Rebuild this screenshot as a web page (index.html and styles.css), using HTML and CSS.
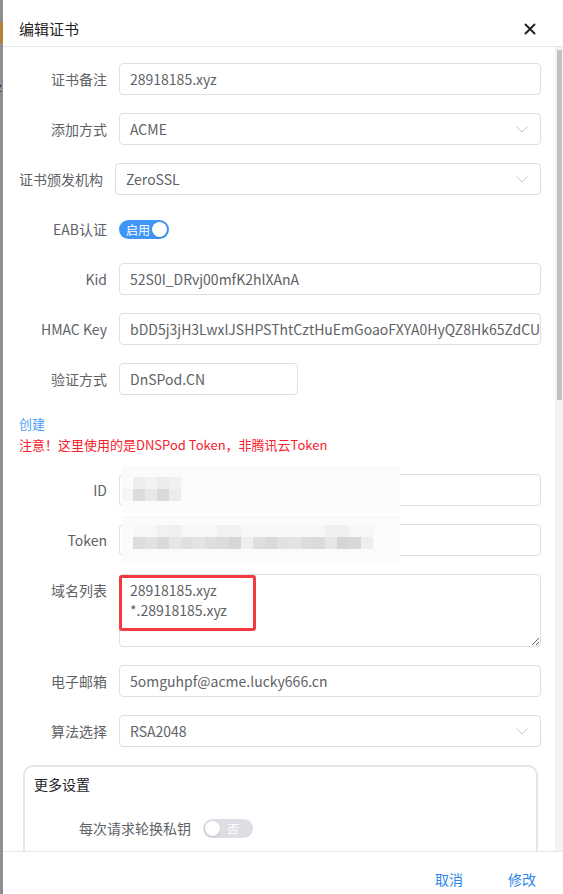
FILE: index.html
```html
<!DOCTYPE html>
<html lang="zh-CN">
<head>
<meta charset="utf-8">
<title>编辑证书</title>
<link rel="stylesheet" href="styles.css">
</head>
<body>
<div class="page-edge">
  <div class="edge-mark"></div>
  <div class="edge-letter">z</div>
</div>
<div class="dialog">
  <div class="dialog-header">
    <span class="dialog-title">编辑证书</span>
    <span class="close-btn">
      <svg width="12" height="12" viewBox="0 0 12 12"><path d="M1.5 1.5 L10.5 10.5 M10.5 1.5 L1.5 10.5" stroke="#1f2225" stroke-width="2" stroke-linecap="round"/></svg>
    </span>
  </div>
  <div class="dialog-main">
    <div class="dialog-body">
      <div class="form-row">
        <label class="form-label">证书备注</label>
        <div class="input">28918185.xyz</div>
      </div>
      <div class="form-row">
        <label class="form-label">添加方式</label>
        <div class="input select">ACME
          <svg class="chevron" width="12" height="7" viewBox="0 0 12 7"><polyline points="0.5,0.5 6,6 11.5,0.5" fill="none" stroke="#c0c4cc" stroke-width="1"/></svg>
        </div>
      </div>
      <div class="form-row">
        <label class="form-label form-label--wide">证书颁发机构</label>
        <div class="input select">ZeroSSL
          <svg class="chevron" width="12" height="7" viewBox="0 0 12 7"><polyline points="0.5,0.5 6,6 11.5,0.5" fill="none" stroke="#c0c4cc" stroke-width="1"/></svg>
        </div>
      </div>
      <div class="form-row">
        <label class="form-label">EAB认证</label>
        <div class="switch switch--on"><span class="switch-text">启用</span><span class="switch-knob"></span></div>
      </div>
      <div class="form-row">
        <label class="form-label">Kid</label>
        <div class="input">52S0I_DRvj00mfK2hlXAnA</div>
      </div>
      <div class="form-row">
        <label class="form-label">HMAC Key</label>
        <div class="input">bDD5j3jH3LwxlJSHPSThtCztHuEmGoaoFXYA0HyQZ8Hk65ZdCUuN</div>
      </div>
      <div class="form-row">
        <label class="form-label">验证方式</label>
        <div class="input input--half">DnSPod.CN</div>
      </div>
      <div class="hint">
        <div class="hint-link">创建</div>
        <div class="hint-warn">注意！这里使用的是DNSPod Token，非腾讯云Token</div>
      </div>
      <div class="form-row">
        <label class="form-label">ID</label>
        <div class="input masked">
          <svg class="mosaic" width="278" height="47" viewBox="0 0 278 47">
            <rect x="0" y="0" width="278" height="47" fill="#fbfbfb"/>
            <rect x="11" y="11" width="12" height="12" fill="#eeeeee"/>
            <rect x="23" y="11" width="12" height="12" fill="#f2f2f2"/>
            <rect x="35" y="11" width="12" height="12" fill="#ebebeb"/>
            <rect x="47" y="11" width="12" height="12" fill="#f0f0f0"/>
            <rect x="0" y="23" width="11" height="12" fill="#f6f6f6"/>
            <rect x="11" y="23" width="12" height="12" fill="#dcdcdc"/>
            <rect x="23" y="23" width="12" height="12" fill="#e8e8e8"/>
            <rect x="35" y="23" width="12" height="12" fill="#d9d9d9"/>
            <rect x="47" y="23" width="12" height="12" fill="#ececec"/>
          </svg>
        </div>
      </div>
      <div class="form-row">
        <label class="form-label">Token</label>
        <div class="input masked">
          <svg class="mosaic" width="278" height="47" viewBox="0 0 278 47">
            <rect x="0" y="0" width="278" height="47" fill="#fbfbfb"/>
            <rect x="11" y="9" width="240" height="12" fill="#f7f7f7"/>
            <rect x="35" y="9" width="12" height="12" fill="#f1f1f1"/>
            <rect x="47" y="9" width="12" height="12" fill="#efefef"/>
            <rect x="95" y="9" width="24" height="12" fill="#f1f1f1"/>
            <rect x="203" y="9" width="24" height="12" fill="#f0f0f0"/>
            <rect x="11" y="21" width="12" height="12" fill="#dddddd"/>
            <rect x="23" y="21" width="12" height="12" fill="#e2e2e2"/>
            <rect x="35" y="21" width="12" height="12" fill="#dadada"/>
            <rect x="47" y="21" width="12" height="12" fill="#e6e6e6"/>
            <rect x="59" y="21" width="12" height="12" fill="#e0e0e0"/>
            <rect x="71" y="21" width="12" height="12" fill="#e4e4e4"/>
            <rect x="83" y="21" width="12" height="12" fill="#dedede"/>
            <rect x="95" y="21" width="12" height="12" fill="#dcdcdc"/>
            <rect x="107" y="21" width="12" height="12" fill="#d6d6d6"/>
            <rect x="119" y="21" width="12" height="12" fill="#eeeeee"/>
            <rect x="131" y="21" width="12" height="12" fill="#dedede"/>
            <rect x="143" y="21" width="12" height="12" fill="#d9d9d9"/>
            <rect x="155" y="21" width="12" height="12" fill="#e1e1e1"/>
            <rect x="167" y="21" width="12" height="12" fill="#e3e3e3"/>
            <rect x="179" y="21" width="12" height="12" fill="#dcdcdc"/>
            <rect x="191" y="21" width="12" height="12" fill="#dadada"/>
            <rect x="203" y="21" width="12" height="12" fill="#e6e6e6"/>
            <rect x="215" y="21" width="12" height="12" fill="#d5d5d5"/>
            <rect x="227" y="21" width="12" height="12" fill="#d8d8d8"/>
            <rect x="239" y="21" width="12" height="12" fill="#eeeeee"/>
          </svg>
        </div>
      </div>
      <div class="form-row form-row--tall">
        <label class="form-label">域名列表</label>
        <div class="textarea-wrap">
          <textarea class="textarea" readonly>28918185.xyz
*.28918185.xyz</textarea>
          <div class="highlight-box"></div>
        </div>
      </div>
      <div class="form-row">
        <label class="form-label">电子邮箱</label>
        <div class="input">5omguhpf@acme.lucky666.cn</div>
      </div>
      <div class="form-row">
        <label class="form-label">算法选择</label>
        <div class="input select">RSA2048
          <svg class="chevron" width="12" height="7" viewBox="0 0 12 7"><polyline points="0.5,0.5 6,6 11.5,0.5" fill="none" stroke="#c0c4cc" stroke-width="1"/></svg>
        </div>
      </div>
      <div class="more-box">
        <div class="more-title">更多设置</div>
        <div class="form-row more-row">
          <label class="form-label more-label">每次请求轮换私钥</label>
          <div class="switch switch--off"><span class="switch-knob"></span><span class="switch-text">否</span></div>
        </div>
      </div>
    </div>
    <div class="scrollbar"><div class="scrollbar-thumb"></div></div>
  </div>
  <div class="dialog-footer">
    <button class="text-btn" type="button">取消</button>
    <button class="text-btn" type="button">修改</button>
  </div>
</div>
</body>
</html>
```

FILE: styles.css
```css
html, body {
  margin: 0;
  padding: 0;
  height: 894px;
  overflow: hidden;
}

body {
  display: flex;
  font-family: "Noto Sans CJK SC", "Noto Sans", sans-serif;
  font-size: 14px;
  color: #606266;
  background: #ffffff;
}

.page-edge {
  width: 3px;
  flex-shrink: 0;
  background: #8e8f94;
  display: flex;
  flex-direction: column;
  overflow: hidden;
}

.edge-mark {
  margin-top: 22px;
  height: 22px;
  background: #b4823a;
}

.edge-letter {
  margin-top: 36px;
  font-size: 12px;
  line-height: 14px;
  color: #222;
  margin-left: -4px;
}

.dialog {
  flex: 1;
  display: flex;
  flex-direction: column;
  background: #fff;
  min-width: 0;
}

.dialog-header {
  height: 46px;
  flex-shrink: 0;
  border-bottom: 1px solid #e5e6eb;
  display: flex;
  align-items: flex-start;
  justify-content: space-between;
  padding: 0 27px 0 16px;
  box-sizing: content-box;
}

.dialog-title {
  font-size: 15px;
  color: #1f2225;
  line-height: 20px;
  margin-top: 19px;
}

.close-btn {
  display: flex;
  width: 12px;
  height: 12px;
  margin-top: 23px;
}

.dialog-main {
  height: 804px;
  flex-shrink: 0;
  display: flex;
}

.dialog-body {
  flex: 1;
  min-width: 0;
  overflow: hidden;
  padding: 16px 14px 20px 16px;
}

.scrollbar {
  width: 8px;
  flex-shrink: 0;
  background: #f3f3f3;
  padding: 3px 1px 0 2px;
  box-sizing: border-box;
}

.scrollbar-thumb {
  height: 350px;
  background: #c1c1c1;
}

.form-row {
  display: flex;
  align-items: center;
  height: 32px;
  margin-bottom: 18px;
}

.form-row--tall {
  height: auto;
  align-items: flex-start;
  margin-bottom: 18px;
}

.form-label {
  width: 88px;
  flex-shrink: 0;
  margin-right: 12px;
  text-align: right;
  white-space: nowrap;
  color: #606266;
  line-height: 20px;
}

.form-row--tall .form-label {
  margin-top: 6px;
}

.form-label--wide {
  width: 84px;
}

.input {
  position: relative;
  flex: 1;
  min-width: 0;
  height: 32px;
  box-sizing: border-box;
  border: 1px solid #dcdfe6;
  border-radius: 4px;
  padding: 0 10px;
  line-height: 30px;
  color: #606266;
  white-space: nowrap;
  overflow: hidden;
}

.input--half {
  flex: 0 0 179px;
}

.select {
  padding-right: 30px;
}

.chevron {
  position: absolute;
  right: 12px;
  top: 12px;
}

.masked {
  overflow: visible;
}

.mosaic {
  position: absolute;
  left: 2px;
  top: -9px;
}

.switch {
  position: relative;
  width: 50px;
  height: 19px;
  border-radius: 10px;
  box-sizing: border-box;
  display: flex;
  align-items: center;
  padding: 0 2px;
}

.switch--on {
  background: #3f96f6;
  justify-content: space-between;
  padding-left: 7px;
}

.switch--off {
  background: #dcdee3;
  justify-content: space-between;
  padding-right: 14px;
}

.switch-text {
  color: #fff;
  font-size: 12px;
  line-height: 19px;
}

.switch-knob {
  width: 15px;
  height: 15px;
  border-radius: 50%;
  background: #fff;
  box-shadow: 0 1px 2px rgba(0, 0, 0, 0.15);
}

.hint {
  margin-bottom: 19px;
  line-height: 21px;
  font-size: 13px;
}

.hint-link {
  color: #4c9ef8;
}

.hint-warn {
  color: #f5222d;
}

.textarea-wrap {
  position: relative;
  flex: 1;
  min-width: 0;
}

.textarea {
  display: block;
  width: 100%;
  height: 73px;
  box-sizing: border-box;
  border: 1px solid #dcdfe6;
  border-radius: 4px;
  padding: 5px 10px;
  font-family: "Noto Sans CJK SC", "Noto Sans", sans-serif;
  font-size: 14px;
  line-height: 20px;
  color: #606266;
  resize: vertical;
  outline: none;
}

.highlight-box {
  position: absolute;
  left: 0;
  top: 1px;
  width: 137px;
  height: 56px;
  box-sizing: border-box;
  border: 3px solid #f23a3f;
  border-radius: 3px;
}

.more-box {
  margin: 0 3px 0 4px;
  border: 2px solid #e3e5ea;
  border-radius: 10px;
  padding: 7px 10px 16px 9px;
}

.more-title {
  color: #1f2225;
  line-height: 20px;
  margin-bottom: 18px;
}

.more-label {
  width: 157px;
}

.more-row:last-child {
  margin-bottom: 0;
}

.dialog-footer {
  flex: 1;
  border-top: 1px solid #e5e6eb;
  display: flex;
  justify-content: flex-end;
  align-items: flex-start;
  gap: 45px;
  padding: 17px 27px 0 0;
}

.text-btn {
  border: 0;
  background: none;
  padding: 0;
  font-family: "Noto Sans CJK SC", "Noto Sans", sans-serif;
  font-size: 14px;
  line-height: 20px;
  color: #2d87e8;
  cursor: pointer;
}
```
